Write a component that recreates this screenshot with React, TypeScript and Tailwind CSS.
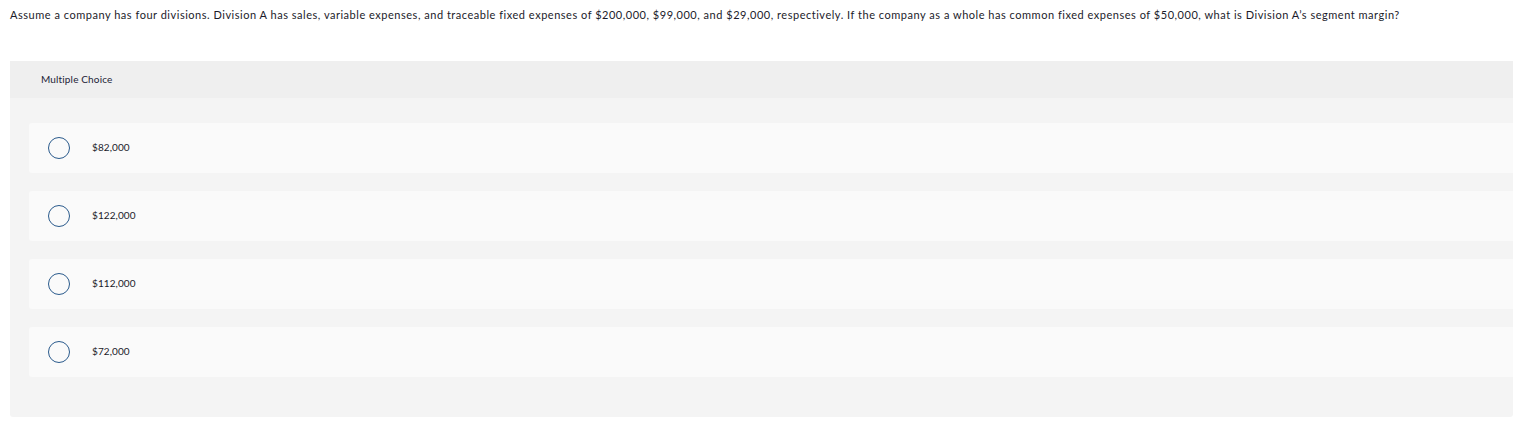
const OPTIONS = ["$82,000", "$122,000", "$112,000", "$72,000"];

export default function App() {
  return (
    <div className="min-h-[433px] bg-white pt-[8px] text-[#1b1b2a]" style={{ fontFamily: "Lato, 'Open Sans', sans-serif" }}>
      <p className="ml-[10px] text-[11px] leading-[14px] tracking-[0.52px]">
        Assume a company has four divisions. Division A has sales, variable expenses, and traceable fixed expenses of
        $200,000, $99,000, and $29,000, respectively. If the company as a whole has common fixed expenses of $50,000,
        what is Division A’s segment margin?
      </p>

      <div className="ml-[10px] mt-[39px] rounded-b-[3px] bg-[#f4f4f4] pb-[40px]">
        <div className="flex h-[37px] items-center bg-[#efefef] pl-[31px] text-[10px] tracking-[0.15px] text-[#222236]">
          Multiple Choice
        </div>
        <div className="flex flex-col gap-[18px] pl-[19px] pt-[25px]">
          {OPTIONS.map((o) => (
            <div key={o} className="flex h-[50px] items-center rounded-l-[3px] bg-[#fafafa]">
              <span className="ml-[19px] h-[22px] w-[22px] rounded-full border-[1.4px] border-[#2a5a8c]" />
              <span className="ml-[22px] -mt-[2px] text-[10px] tracking-[0.1px] text-[#1b1b2a]">{o}</span>
            </div>
          ))}
        </div>
      </div>
    </div>
  );
}
